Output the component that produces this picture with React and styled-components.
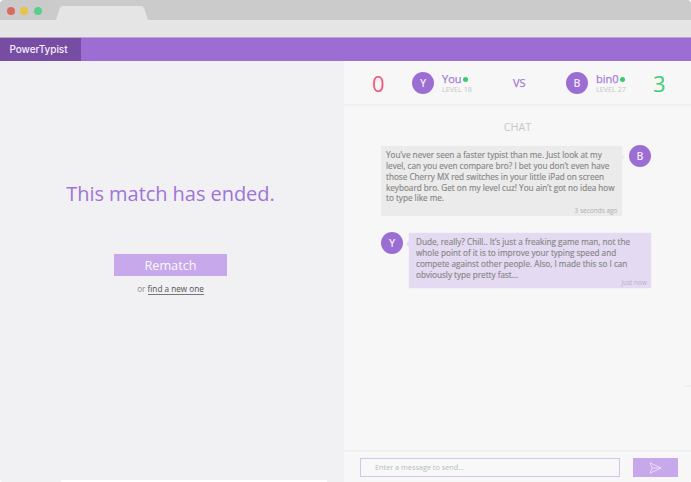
import React from "react";
import styled, { createGlobalStyle } from "styled-components";

const GlobalStyle = createGlobalStyle`
  * { box-sizing: border-box; }
  body { margin: 0; background: #fff; font-family: "Open Sans", "Noto Sans", sans-serif; }
`;

const Window = styled.div`
  position: relative;
  width: 691px;
  height: 482px;
  display: flex;
  flex-direction: column;
  overflow: hidden;
  background: #f1f1f4;
  border-radius: 4px 4px 3px 3px;
`;

const TitleBar = styled.div`
  flex: 0 0 20px;
  display: flex;
  align-items: flex-start;
  padding: 7px 0 0 7px;
  background: #cbcbcb;
`;

const Light = styled.span`
  width: 8px;
  height: 8px;
  margin-right: 5.3px;
  border-radius: 50%;
  background: ${(p) => p.$color};
`;

const BrowserTab = styled.svg`
  width: 92px;
  height: 14px;
  margin: -1px 0 0 9.1px;
`;

const AddressBar = styled.div`
  flex: 0 0 18px;
  background: #e5e5e5;
  border-bottom: 1px solid #b9a6cd;
`;

const Nav = styled.nav`
  flex: 0 0 23px;
  display: flex;
  background: #9c6dd3;
`;

const Brand = styled.div`
  width: 81px;
  padding-left: 9.5px;
  background: #774da4;
  color: #f5effb;
  font: 500 10px/23px Inter, sans-serif;
  letter-spacing: -0.06px;
`;

const Main = styled.main`
  flex: 1;
  display: flex;
  min-height: 0;
`;

const ResultPane = styled.section`
  width: 344px;
  display: flex;
  flex-direction: column;
  align-items: center;
  background: #f1f1f4;
  padding-right: 3px;
`;

const ResultTitle = styled.h1`
  margin: 119px 0 0;
  color: #a074d6;
  font-size: 20px;
  letter-spacing: -0.05px;
  line-height: 28px;
  font-weight: 400;
  white-space: nowrap;
`;

const RematchButton = styled.button`
  width: 113px;
  height: 22px;
  margin-top: 46px;
  padding: 0;
  border: 0;
  background: #c7a8ea;
  color: #fbf8fe;
  font: 400 12.7px/23px "Open Sans", sans-serif;
`;

const Alternative = styled.div`
  margin-top: 7px;
  color: #8a8a8d;
  font-size: 8.2px;
  line-height: 12px;
`;

const TextLink = styled.a`
  display: inline-block;
  color: #505053;
  border-bottom: 1px solid #77777a;
  line-height: 11px;
`;

const ChatPane = styled.section`
  flex: 1;
  display: flex;
  flex-direction: column;
  background: #f7f7f7;
`;

const Scoreboard = styled.header`
  flex: 0 0 45px;
  display: flex;
  align-items: center;
  border-bottom: 2px solid #f1f1f1;
  padding-left: 28px;
`;

const Score = styled.div`
  width: ${(p) => p.$width}px;
  color: ${(p) => p.$color};
  font-size: 22px;
  line-height: 30px;
`;

const Avatar = styled.div`
  flex: none;
  width: 22px;
  height: 22px;
  border-radius: 50%;
  background: #9c6dd3;
  color: #f0e7fa;
  font-size: 10.5px;
  font-weight: 600;
  line-height: 22px;
  text-align: center;
`;

const Player = styled.div`
  width: ${(p) => p.$width}px;
  padding-left: 8px;
`;

const PlayerName = styled.div`
  display: flex;
  align-items: center;
  color: #a67cd9;
  font-size: 11px;
  line-height: 11px;
  padding-top: 1px;
  -webkit-text-stroke: 0.25px #a67cd9;
`;

const OnlineDot = styled.span`
  width: 5px;
  height: 5px;
  margin: 1px 0 0 1px;
  border-radius: 50%;
  background: #3acb6a;
`;

const Level = styled.div`
  color: #c4c4c4;
  font-size: 7.2px;
  line-height: 8px;
  margin-top: 1px;
`;

const Versus = styled.div`
  width: 53px;
  color: #a67cd9;
  font-size: 11px;
  line-height: 14px;
  -webkit-text-stroke: 0.25px #a67cd9;
`;

const Conversation = styled.div`
  flex: 1;
  display: flex;
  flex-direction: column;
`;

const ChatTitle = styled.h2`
  margin: 13px 0 10px;
  color: #c7c7c7;
  font-size: 10.8px;
  font-weight: 400;
  line-height: 16px;
  text-align: center;
`;

const Message = styled.article`
  display: flex;
  gap: ${(p) => (p.$mine ? 6 : 7.5)}px;
  align-items: flex-start;
  flex-direction: ${(p) => (p.$mine ? "row" : "row-reverse")};
  width: 270px;
  margin: 0 0 16px 37px;
`;

const Bubble = styled.div`
  position: relative;
  flex: 1;
  height: ${(p) => p.$height}px;
  margin-top: 1px;
  padding: ${(p) => (p.$mine ? "4px 0 0 7px" : "4px 0 0 5px")};
  background: ${(p) => (p.$mine ? "#e4daf1" : "#ebebeb")};
  box-shadow: 0 0 1px ${(p) => (p.$mine ? "#e4daf1" : "#ebebeb")};
  color: #858585;
  font-size: 8.16px;
  line-height: 10.85px;
  white-space: nowrap;

  &::after {
    content: "";
    position: absolute;
    top: 8px;
    ${(p) => (p.$mine ? "left: -3px" : "right: -3px")};
    border: solid transparent;
    border-width: 3px 0 3px 3px;
    border-left-color: ${(p) => (p.$mine ? "#e4daf1" : "#ebebeb")};
    transform: ${(p) => (p.$mine ? "scaleX(-1)" : "none")};
  }
`;

const Line = styled.div`
  width: max-content;
  -webkit-text-stroke: 0.15px #858585;
`;

const Time = styled.time`
  position: absolute;
  right: 4px;
  bottom: 1px;
  color: ${(p) => (p.$mine ? "#b9b0c4" : "#b0b0b0")};
  font-size: 6.5px;
  line-height: 9px;
`;

const ScrollMark = styled.span`
  align-self: flex-end;
  width: 6px;
  height: 2px;
  margin-top: auto;
  margin-bottom: 63px;
  background: #f1f1f1;
`;

const Composer = styled.footer`
  flex: 0 0 32px;
  display: flex;
  align-items: flex-start;
  gap: 13px;
  padding: 6px 0 0 16px;
  border-top: 2px solid #f0f0f0;
`;

const MessageInput = styled.input`
  width: 260px;
  height: 19px;
  padding: 0 0 1px 14px;
  border: 1px solid #d6c4ec;
  border-radius: 0;
  outline: 0;
  background: #f8f8f8;
  font: 400 7.3px "Open Sans", sans-serif;
  &::placeholder { color: #b8b8b8; opacity: 1; }
`;

const SendButton = styled.button`
  display: flex;
  align-items: center;
  justify-content: center;
  width: 45px;
  height: 19px;
  padding: 0;
  border: 0;
  background: #c7a8ea;
`;

const BottomEdge = styled.div`
  position: absolute;
  left: 61px;
  bottom: 0;
  width: 266px;
  height: 2px;
  background: #fff;
`;

const otherLines = [
  "You’ve never seen a faster typist than me. Just look at my",
  "level, can you even compare bro? I bet you don’t even have",
  "those Cherry MX red switches in your little iPad on screen",
  "keyboard bro. Get on my level cuz! You ain’t got no idea how",
  "to type like me.",
];

const myLines = [
  "Dude, really? Chill.. It’s just a freaking game man, not the",
  "whole point of it is to improve your typing speed and",
  "compete against other people. Also, I made this so I can",
  "obviously type pretty fast...",
];

function PlayerInfo({ name, level, width }) {
  return (
    <Player $width={width}>
      <PlayerName>{name}<OnlineDot /></PlayerName>
      <Level>LEVEL {level}</Level>
    </Player>
  );
}

function ChatMessage({ mine, initial, lines, time, height }) {
  return (
    <Message $mine={mine}>
      <Avatar>{initial}</Avatar>
      <Bubble $mine={mine} $height={height}>
        {lines.map((line) => <Line key={line}>{line}</Line>)}
        <Time $mine={mine}>{time}</Time>
      </Bubble>
    </Message>
  );
}

export default function App() {
  return (
    <>
      <GlobalStyle />
      <Window>
        <TitleBar>
          <Light $color="#e0695f" />
          <Light $color="#e6c544" />
          <Light $color="#58cf8b" />
          <BrowserTab viewBox="0 0 92 14">
            <path d="M0 14 L4 2 Q4.7 0 7 0 H85 Q87.3 0 88 2 L92 14 Z" fill="#e5e5e5" />
          </BrowserTab>
        </TitleBar>
        <AddressBar />
        <Nav><Brand>PowerTypist</Brand></Nav>
        <Main>
          <ResultPane>
            <ResultTitle>This match has ended.</ResultTitle>
            <RematchButton>Rematch</RematchButton>
            <Alternative>or <TextLink>find a new one</TextLink></Alternative>
          </ResultPane>
          <ChatPane>
            <Scoreboard>
              <Score $color="#ee5b7d" $width={40}>0</Score>
              <Avatar>Y</Avatar>
              <PlayerInfo name="You" level={18} width={79} />
              <Versus>VS</Versus>
              <Avatar>B</Avatar>
              <PlayerInfo name="bin0" level={27} width={65} />
              <Score $color="#3fcc70" $width={20}>3</Score>
            </Scoreboard>
            <Conversation>
              <ChatTitle>CHAT</ChatTitle>
              <ChatMessage initial="B" lines={otherLines} time="3 seconds ago" height={70} />
              <ChatMessage mine initial="Y" lines={myLines} time="Just now" height={55} />
              <ScrollMark />
            </Conversation>
            <Composer>
              <MessageInput placeholder="Enter a message to send..." />
              <SendButton aria-label="Send">
                <svg width="13" height="12" viewBox="0 0 13 12" fill="none" stroke="#eee2fa" strokeWidth="0.9" strokeLinejoin="round">
                  <path d="M1 0.8 L12 6 L1 11.2 L3.2 6 Z M3.2 6 H12" />
                </svg>
              </SendButton>
            </Composer>
          </ChatPane>
        </Main>
        <BottomEdge />
      </Window>
    </>
  );
}
